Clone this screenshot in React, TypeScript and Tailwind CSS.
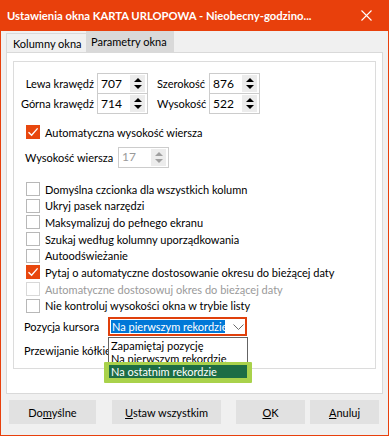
import React from 'react';

const ui = "font-['Lato',sans-serif] text-[11px] leading-none text-black whitespace-nowrap";

function Spin({ value, disabled = false }: { value: string; disabled?: boolean }) {
  return (
    <div className="flex h-[21px] w-[51px] items-center border border-[#cccccc] bg-white">
      <span className={`flex-1 pl-[3px] text-[12px] ${disabled ? 'text-[#9a9a9a]' : ''}`}>{value}</span>
      <span className="mr-[2px] flex h-[17px] w-[15px] flex-col items-center justify-center gap-[3px] bg-[#ececec]">
        <svg width="8" height="4" viewBox="0 0 8 4">
          <path d="M0 4 L4 0 L8 4 Z" fill={disabled ? '#a0a0a0' : '#000'} />
        </svg>
        <svg width="8" height="4" viewBox="0 0 8 4">
          <path d="M0 0 L8 0 L4 4 Z" fill={disabled ? '#a0a0a0' : '#000'} />
        </svg>
      </span>
    </div>
  );
}

function Check({ label, checked = false, disabled = false }: { label: string; checked?: boolean; disabled?: boolean }) {
  return (
    <div className="flex h-[16.7px] items-center pl-[12px]">
      <span
        className={`flex h-[14px] w-[14px] shrink-0 items-center justify-center border ${
          checked ? 'border-[#e8470e] bg-[#e8470e]' : disabled ? 'border-[#d8d8d8] bg-white' : 'border-[#b8b8b8] bg-white'
        }`}
      >
        {checked && (
          <svg width="12" height="12" viewBox="0 0 12 12">
            <path d="M1.5 6.2 L4.6 9.3 L10.6 2.4" fill="none" stroke="#fff" strokeWidth="1.4" />
          </svg>
        )}
      </span>
      <span className={`ml-[5px] ${disabled ? 'text-[#9a9a9a]' : ''}`}>{label}</span>
    </div>
  );
}

function Btn({ w, children }: { w: string; children: React.ReactNode }) {
  return <div className={`flex h-[24px] ${w} items-center justify-center bg-[#e1e1e1]`}>{children}</div>;
}

export default function App() {
  return (
    <div className={`flex h-[436px] w-[389px] flex-col bg-[#e8400c] px-[1px] pb-[1px] ${ui}`}>
      <div className="flex h-[31px] shrink-0 items-center justify-between pl-[6px] pr-[16px] text-[11.25px] font-bold text-white">
        <span>Ustawienia okna KARTA URLOPOWA - Nieobecny-godzino...</span>
        <svg width="11" height="11" viewBox="0 0 11 11">
          <path d="M0.5 0.5 L10.5 10.5 M10.5 0.5 L0.5 10.5" stroke="#fff" strokeWidth="1.1" />
        </svg>
      </div>

      <div className="flex flex-1 flex-col bg-[#f0f0f0] px-[5px]">
        <div className="flex h-[21px] items-end">
          <div className="flex h-[19px] w-[80px] items-center border-l border-t border-[#d9d9d9] pl-[6px]">Kolumny okna</div>
          <div className="flex h-[21px] w-[88px] items-center bg-[#d9d9d9] pl-[5px]">Parametry okna</div>
        </div>

        <div className="h-[342px] border border-[#d9d9d9] bg-white px-[6px] pt-[8px]">
          <div className="relative h-[308px] border border-[#dcdcdc] pt-[11px]">
            <div className="flex">
              <div className="flex flex-col">
                <div className="flex items-center">
                  <span className="w-[83px] pr-[3px] text-right">Lewa krawędź</span>
                  <Spin value="707" />
                </div>
                <div className="-mt-[1px] flex items-center">
                  <span className="w-[83px] pr-[3px] text-right">Górna krawędź</span>
                  <Spin value="714" />
                </div>
              </div>
              <div className="ml-[9px] flex flex-col">
                <div className="flex items-center">
                  <span className="w-[52px]">Szerokość</span>
                  <Spin value="876" />
                </div>
                <div className="-mt-[1px] flex items-center">
                  <span className="w-[52px]">Wysokość</span>
                  <Spin value="522" />
                </div>
              </div>
            </div>

            <div className="mt-[10px]">
              <Check label="Automatyczna wysokość wiersza" checked />
            </div>

            <div className="mt-[6px] flex items-center pl-[11px]">
              <span className="w-[93px]">Wysokość wiersza</span>
              <Spin value="17" disabled />
            </div>

            <div className="mt-[13px] flex flex-col">
              <Check label="Domyślna czcionka dla wszystkich kolumn" />
              <Check label="Ukryj pasek narzędzi" />
              <Check label="Maksymalizuj do pełnego ekranu" />
              <Check label="Szukaj według kolumny uporządkowania" />
              <Check label="Autoodświeżanie" />
              <Check label="Pytaj o automatyczne dostosowanie okresu do bieżącej daty" checked />
              <Check label="Automatyczne dostosowuj okres do bieżącej daty" disabled />
              <Check label="Nie kontroluj wysokości okna w trybie listy" />
            </div>

            <div className="mt-[3px] flex items-center pl-[10px]">
              <span className="w-[84px]">Pozycja kursora</span>
              <div className="relative">
                <div className="flex h-[19px] w-[139px] items-center border-2 border-[#e0400c] bg-white pl-[1px]">
                  <span className="flex h-[13px] w-[114px] items-center bg-[#0078d7] pl-[1px] text-white">Na pierwszym rekordzie</span>
                  <svg className="ml-[8px]" width="11" height="6" viewBox="0 0 11 6">
                    <path d="M0.5 0.5 L5.5 5.5 L10.5 0.5" fill="none" stroke="#6b6b6b" strokeWidth="1" />
                  </svg>
                </div>
                <div className="absolute left-0 top-[20px] z-10 flex h-[41px] w-[140px] flex-col border border-[#646464] bg-white pt-[1px] leading-[13px]">
                  <div className="h-[13px] pl-[2px]">Zapamiętaj pozycję</div>
                  <div className="h-[13px] pl-[2px]">Na pierwszym rekordzie</div>
                  <div className="relative h-[13px]">
                    <div className="absolute -bottom-[5px] -left-[5px] -right-[5px] -top-[3px] rounded-[1px] bg-[#a9d24b]" />
                    <div className="relative h-[13px] w-full bg-[#1d6d45] pl-[2px] text-white">Na ostatnim rekordzie</div>
                  </div>
                </div>
              </div>
            </div>

            <div className="mt-[6px] flex h-[17px] items-center pl-[10px]">Przewijanie kółkiem myszy</div>
          </div>
        </div>

        <div className="mt-[6px] flex pl-[3px]">
          <Btn w="w-[87px]">
            <span>
              Do<span className="underline">m</span>yślne
            </span>
          </Btn>
          <div className="ml-[16px]">
            <Btn w="w-[109px]">
              <span>
                <span className="underline">U</span>staw wszystkim
              </span>
            </Btn>
          </div>
          <div className="ml-[15px]">
            <Btn w="w-[69px]">
              <span>
                <span className="underline">O</span>K
              </span>
            </Btn>
          </div>
          <div className="ml-[5px]">
            <Btn w="w-[69px]">
              <span>
                <span className="underline">A</span>nuluj
              </span>
            </Btn>
          </div>
        </div>
      </div>
    </div>
  );
}
